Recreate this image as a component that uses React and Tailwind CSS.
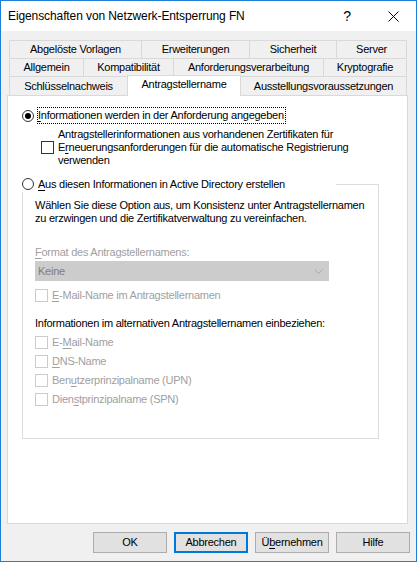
import React from "react";

const font = "font-['Segoe_UI','Liberation_Sans',Arial,sans-serif]";

function Tab({ w, label, selected }) {
  if (selected) {
    return (
      <div
        className={`${w} h-[21px] -mb-[1px] relative z-10 bg-white border-t border-l border-r border-[#d9d9d9] flex items-start justify-center pt-[2px]`}
      >
        {label}
      </div>
    );
  }
  return (
    <div className={`${w} h-full border-t border-l border-[#d9d9d9] bg-[#f0f0f0] flex items-center justify-center last:border-r`}>
      {label}
    </div>
  );
}

function Box({ disabled }) {
  return (
    <span
      className={`w-[13px] h-[13px] shrink-0 bg-white border ${disabled ? "border-[#cccccc]" : "border-[#333333]"}`}
    />
  );
}

function Radio({ checked }) {
  return (
    <span className="w-[12px] h-[12px] shrink-0 rounded-full border border-[#333333] bg-white flex items-center justify-center">
      {checked && <span className="w-[6px] h-[6px] rounded-full bg-black" />}
    </span>
  );
}

function Check({ children }) {
  return (
    <div className="h-[19px] flex items-center gap-[4px] text-[#a0a0a0]">
      <Box disabled />
      <span>{children}</span>
    </div>
  );
}

function Button({ children, primary }) {
  return (
    <div
      className={`w-[74px] h-[21px] bg-[#e1e1e1] flex items-center justify-center ${
        primary ? "border-2 border-[#0078d7]" : "border border-[#adadad]"
      }`}
    >
      {children}
    </div>
  );
}

export default function App() {
  return (
    <div
      className={`w-[417px] h-[562px] border border-[#1e7fd8] bg-[#f0f0f0] flex flex-col text-black text-[11px] tracking-[-0.25px] leading-[13px] ${font}`}
    >
      {/* title bar */}
      <div className="h-[30px] bg-white flex items-center pl-[7px] text-[12px] tracking-[-0.1px]">
        <span className="flex-1">Eigenschaften von Netzwerk-Entsperrung FN</span>
        <span className="text-[14px] w-[10px] mr-[36px] text-center">?</span>
        <svg width="11" height="11" viewBox="0 0 11 11" className="mr-[17px]">
          <path d="M0.5 0.5 L10.5 10.5 M10.5 0.5 L0.5 10.5" stroke="#000" strokeWidth="1" fill="none" />
        </svg>
      </div>

      <div className="flex-1 flex flex-col pt-[9px] pl-[6px] pr-[8px]">
        {/* tabs */}
        <div className="ml-[2px] w-[398px] flex flex-col">
          <div className="flex h-[18px]">
            <Tab w="w-[132px]" label="Abgelöste Vorlagen" />
            <Tab w="w-[108px]" label="Erweiterungen" />
            <Tab w="w-[87px]" label="Sicherheit" />
            <Tab w="w-[71px]" label="Server" />
          </div>
          <div className="flex h-[18px]">
            <Tab w="w-[74px]" label="Allgemein" />
            <Tab w="w-[90px]" label="Kompatibilität" />
            <Tab w="w-[150px]" label="Anforderungsverarbeitung" />
            <Tab w="w-[84px]" label="Kryptografie" />
          </div>
          <div className="flex h-[19px] items-end">
            <div className="w-[118px] h-[19px] border-t border-l border-[#d9d9d9] flex items-center justify-center pt-[1px]">
              Schlüsselnachweis
            </div>
            <Tab w="w-[114px]" label="Antragstellername" selected />
            <div className="w-[166px] h-[19px] border-t border-r border-[#d9d9d9] flex items-center justify-center pt-[1px]">
              Ausstellungsvoraussetzungen
            </div>
          </div>
        </div>

        {/* panel */}
        <div className="w-[401px] h-[429px] bg-white border border-[#d9d9d9] pl-[14px]">
          <div className="mt-[11px] h-[17px] flex items-center gap-[3px]">
            <Radio checked />
            <span className="h-[17px] border border-dotted border-black flex items-center pr-[1px]">
              <u className="underline-offset-[2px]">I</u>nformationen werden in der Anforderung angegeben
            </span>
          </div>

          <div className="mt-[4px] ml-[19px] flex items-center gap-[4px]">
            <Box />
            <div>
              <div>Antragstellerinformationen aus vorhandenen Zertifikaten für</div>
              <div>
                E<u className="underline-offset-[2px]">r</u>neuerungsanforderungen für die automatische Registrierung
              </div>
              <div>verwenden</div>
            </div>
          </div>

          {/* group box with radio caption */}
          <fieldset className="mt-[9px] w-[357px] border border-[#dcdcdc]">
            <legend className="w-[314px] h-[16px] -ml-[1px] flex items-center gap-[4px]">
              <Radio />
              <span>
                <u className="underline-offset-[2px]">A</u>us diesen Informationen in Active Directory erstellen
              </span>
            </legend>

            <div className="pl-[12px] pb-[29px]">
              <div className="mt-[7px]">
                <div>Wählen Sie diese Option aus, um Konsistenz unter Antragstellernamen</div>
                <div>zu erzwingen und die Zertifikatverwaltung zu vereinfachen.</div>
              </div>

              <div className="mt-[21px] text-[#a0a0a0]">
                <u className="underline-offset-[2px]">F</u>ormat des Antragstellernamens:
              </div>
              <div className="mt-[2px] w-[294px] h-[20px] bg-[#cccccc] border border-[#cccccc] flex items-center pl-[2px] pr-[5px] text-[#7d7d7d]">
                <span className="flex-1">Keine</span>
                <svg width="9" height="5" viewBox="0 0 9 5">
                  <path d="M0.5 0.5 L4.5 4.5 L8.5 0.5" stroke="#a8a8a8" strokeWidth="1" fill="none" />
                </svg>
              </div>

              <div className="mt-[5px]">
                <Check>
                  <u className="underline-offset-[2px]">E</u>-Mail-Name im Antragstellernamen
                </Check>
              </div>

              <div className="mt-[12px]">Informationen im alternativen Antragstellernamen einbeziehen:</div>

              <div className="mt-[3px] flex flex-col">
                <Check>
                  E-<u className="underline-offset-[2px]">M</u>ail-Name
                </Check>
                <Check>
                  <u className="underline-offset-[2px]">D</u>NS-Name
                </Check>
                <Check>
                  Ben<u className="underline-offset-[2px]">u</u>tzerprinzipalname (UPN)
                </Check>
                <Check>
                  Dien<u className="underline-offset-[2px]">s</u>tprinzipalname (SPN)
                </Check>
              </div>
            </div>
          </fieldset>
        </div>

        {/* buttons */}
        <div className="mt-[8px] -mr-[2px] flex justify-end gap-[7px]">
          <Button>OK</Button>
          <Button primary>Abbrechen</Button>
          <Button>
            Ü<u className="underline-offset-[2px]">b</u>ernehmen
          </Button>
          <Button>Hilfe</Button>
        </div>
      </div>
    </div>
  );
}
